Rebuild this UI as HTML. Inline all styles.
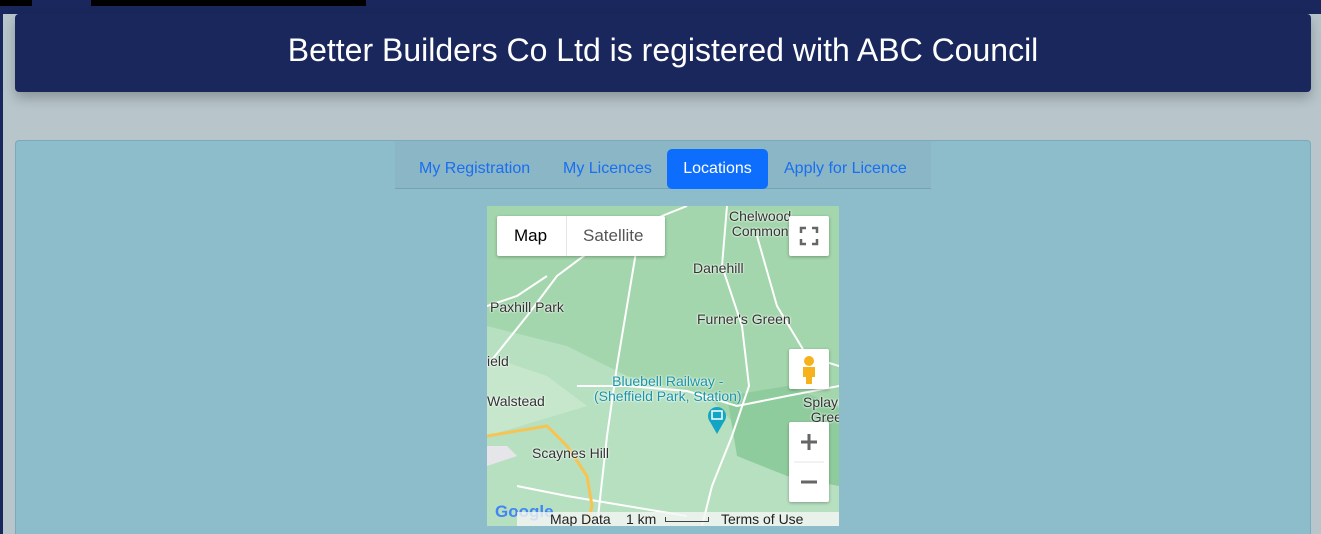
<!DOCTYPE html>
<html style="width:1321px;height:534px;overflow:hidden"><head><meta charset="utf-8"><style>
*{box-sizing:border-box;margin:0;padding:0}
body{width:1321px;height:534px;overflow:hidden;background:#1a275c;font-family:"Liberation Sans",sans-serif;position:relative}
.bar1{position:absolute;left:0;top:0;width:32px;height:6px;background:#000}
.bar2{position:absolute;left:91px;top:0;width:275px;height:6px;background:#000}
.main{position:absolute;left:3px;top:14px;right:0;height:520px;background:#b8c6cb}
.hdr{position:absolute;left:15px;top:14px;width:1296px;height:78px;background:#1a275c;border-radius:4px;box-shadow:0 6px 12px rgba(0,0,0,.25);color:#fff;font-size:32px;text-align:center;line-height:72px}
.panel{position:absolute;left:15px;top:140px;width:1296px;height:394px;background:#8dbccb;border:1px solid #7aaabb;border-bottom:none;border-radius:4px 4px 0 0}
.tabs{position:absolute;left:395px;top:141px;width:536px;height:48px;background:#8ab6c5;border-bottom:1px solid #74a2b3}
.tab{position:absolute;top:8px;height:40px;line-height:40px;font-size:16px;color:#1a6ef0}
.act{background:#0d6efd;color:#fff;left:272px;width:101px;text-align:center;border-radius:5px}
.map{position:absolute;left:487px;top:206px;width:352px;height:320px;background:#a3d6ac;overflow:hidden;font-family:"Liberation Sans",sans-serif}
.lbl{position:absolute;font-size:14px;color:#333;text-shadow:0 0 2px #fff,0 0 2px #fff}
.btn{position:absolute;background:#fff;box-shadow:0 1px 3px rgba(0,0,0,.3);border-radius:2px}
</style></head><body>
<div class="bar1"></div><div class="bar2"></div>
<div class="main"></div>
<div class="hdr">Better Builders Co Ltd is registered with ABC Council</div>
<div class="panel"></div>
<div class="tabs">
<div class="tab" style="left:24px">My Registration</div>
<div class="tab" style="left:168px">My Licences</div>
<div class="tab act">Locations</div>
<div class="tab" style="left:389px">Apply for Licence</div>
</div>
<div class="map">
<svg width="352" height="320" style="position:absolute;left:0;top:0">
<path d="M0 120 L80 140 L140 170 L220 190 L260 230 L300 250 L352 240 L352 320 L0 320Z" fill="#b7e0c0"/>
<path d="M0 150 L60 170 L100 200 L0 230Z" fill="#c6e7cc"/>
<path d="M240 190 L300 180 L352 200 L352 280 L300 270 L250 250Z" fill="#8fcc9d"/>
<path d="M0 240 L20 240 L30 250 L0 260Z" fill="#e6e6ea"/>
<g stroke="#fff" stroke-width="2" fill="none">
<path d="M240 0 L235 60 L255 120 L262 180 L245 230 L225 280 L215 320"/>
<path d="M0 160 L40 110 L70 70 L110 40 L150 20 L200 0"/>
<path d="M150 40 L140 100 L130 160 L120 230 L110 320"/>
<path d="M90 180 L140 180 L200 185 L250 200 L300 190 L352 180"/>
<path d="M0 100 L30 90 L60 70"/>
<path d="M270 30 L290 100 L320 150 L352 160"/>
<path d="M30 280 L80 290 L140 300 L200 310"/>
</g>
<path d="M0 230 L60 220 L80 240 L100 270 L105 300 L100 320" stroke="#f6c453" stroke-width="3" fill="none"/>
<circle cx="230" cy="210" r="9" fill="#12a5c4"/><path d="M222 214 L230 228 L238 214Z" fill="#12a5c4"/>
<rect x="225" y="205" width="10" height="8" fill="none" stroke="#fff" stroke-width="1.5"/>
</svg>
<div class="lbl" style="left:242px;top:3px;line-height:15px;text-align:center">Chelwood<br>Common</div>
<div class="lbl" style="left:206px;top:54px">Danehill</div>
<div class="lbl" style="left:3px;top:93px">Paxhill Park</div>
<div class="lbl" style="left:210px;top:105px">Furner's Green</div>
<div class="lbl" style="left:0;top:147px">ield</div>
<div class="lbl" style="left:0;top:187px">Walstead</div>
<div class="lbl" style="left:107px;top:168px;color:#1a94a8;line-height:15px;text-align:center">Bluebell Railway -<br>(Sheffield Park, Station)</div>
<div class="lbl" style="left:316px;top:189px;line-height:15px">Splayn<br>&nbsp;&nbsp;Gree</div>
<div class="lbl" style="left:45px;top:239px">Scaynes Hill</div>
<div class="btn" style="left:10px;top:10px;width:168px;height:40px;font-size:17px;line-height:40px">
<span style="position:absolute;left:17px;color:#000">Map</span>
<span style="position:absolute;left:69px;top:0;width:1px;height:40px;background:#e6e6e6"></span>
<span style="position:absolute;left:86px;color:#555">Satellite</span></div>
<div class="btn" style="left:302px;top:10px;width:40px;height:40px">
<svg width="40" height="40"><g stroke="#666" stroke-width="2.5" fill="none"><path d="M12 17V12H17M23 12H28V17M28 23V28H23M17 28H12V23"/></g></svg></div>
<div class="btn" style="left:302px;top:143px;width:40px;height:40px">
<svg width="40" height="40"><circle cx="20" cy="12" r="5" fill="#f5b21c"/><path d="M14 18H26V28H23V35H17V28H14Z" fill="#f5b21c"/></svg></div>
<div class="btn" style="left:302px;top:216px;width:40px;height:80px">
<svg width="40" height="80"><path d="M12 20H28M20 12V28M12 60H28" stroke="#666" stroke-width="3"/><path d="M5 40H35" stroke="#e6e6e6"/></svg></div>
<div style="position:absolute;left:8px;top:296px;font-size:17px;font-weight:bold;color:#4285f4">Google</div>
<div style="position:absolute;left:30px;top:306px;width:322px;height:14px;background:rgba(245,245,245,.8);font-size:14px;color:#222;line-height:14px;white-space:nowrap">
<span style="position:absolute;left:33px">Map Data</span><span style="position:absolute;left:109px">1 km</span>
<span style="position:absolute;left:148px;top:5px;width:44px;height:5px;border:1px solid #444;border-top:none"></span>
<span style="position:absolute;left:204px">Terms of Use</span></div>
</div>
</body></html>
